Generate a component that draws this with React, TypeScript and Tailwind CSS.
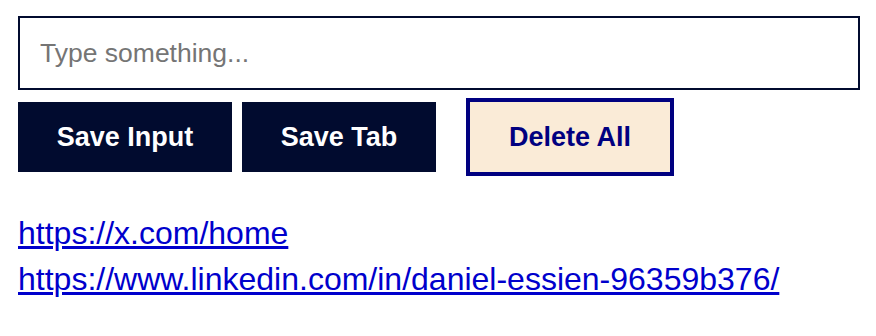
import { useState } from 'react'

const links = [
  'https://x.com/home',
  'https://www.linkedin.com/in/daniel-essien-96359b376/'
]

export default function App() {
  const [value, setValue] = useState('')

  return (
    <div className="min-h-[336px] bg-white px-[18px] pt-4 font-['Liberation_Sans',Arial,sans-serif]">
      <input
        type="text"
        value={value}
        onChange={(e) => setValue(e.target.value)}
        placeholder="Type something..."
        className="block h-[74px] w-[842px] border-2 border-[#010b2f] px-5 text-[26.5px] text-black outline-none placeholder:text-[#757575]"
      />

      <div className="mt-2 flex h-[78px] items-center gap-[10px]">
        <button className="h-[70px] w-[214px] bg-[#010b2f] text-[27px] font-bold text-white">
          Save Input
        </button>
        <button className="h-[70px] w-[194px] bg-[#010b2f] text-[27px] font-bold text-white">
          Save Tab
        </button>
        <button className="ml-5 h-[78px] w-[208px] border-4 border-[#000080] bg-[#faebd7] text-[27px] font-bold text-[#000080]">
          Delete All
        </button>
      </div>

      <ul className="mt-[34px]">
        {links.map((l) => (
          <li key={l} className="text-[32px] leading-[46px]">
            <a href={l} target="_blank" className="text-[#0000cc] underline">
              {l}
            </a>
          </li>
        ))}
      </ul>
    </div>
  )
}
